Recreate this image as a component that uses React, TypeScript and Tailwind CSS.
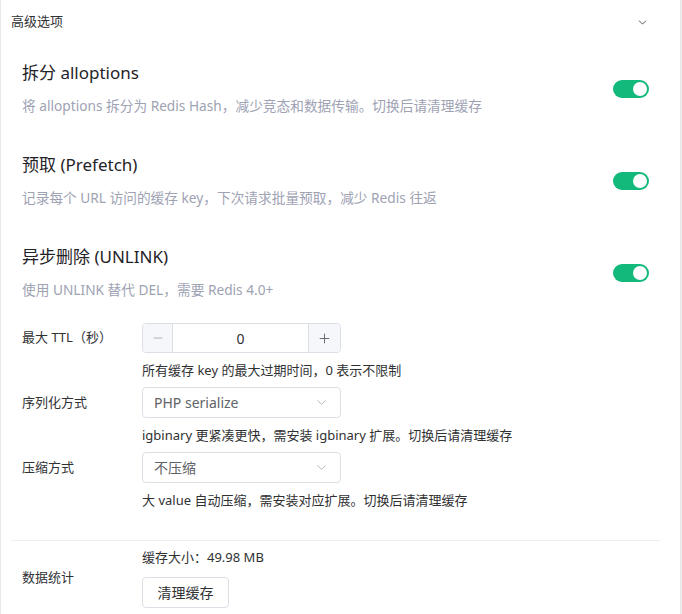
import { ChevronDown, Minus, Plus } from "lucide-react";

const font = { fontFamily: '"Noto Sans", "Noto Sans CJK SC", sans-serif' };

function Toggle() {
  return (
    <span className="flex h-[18px] w-[36px] shrink-0 items-center justify-end rounded-full bg-[#13b97b] px-[2px]">
      <span className="h-[14px] w-[14px] rounded-full bg-white" />
    </span>
  );
}

function ToggleRow({ title, desc }: { title: string; desc: string }) {
  return (
    <div className="flex items-center justify-between pr-[31px]">
      <div className="flex flex-col gap-[11px]">
        <div className="text-[17px] leading-[24px] text-[#1f2328]">{title}</div>
        <div className="text-[13.7px] leading-[20px] text-[#9ea2b3]">{desc}</div>
      </div>
      <Toggle />
    </div>
  );
}

function FieldRow({ label, children }: { label: string; children: React.ReactNode }) {
  return (
    <div className="flex items-center">
      <div className="w-[120px] shrink-0 text-[13px] text-[#303133]">{label}</div>
      <div className="flex flex-col">{children}</div>
    </div>
  );
}

function Select({ value }: { value: string }) {
  return (
    <div className="flex h-[31px] w-[199px] items-center justify-between rounded-[4px] border border-[#dcdfe6] bg-white pl-[11px] pr-[11px] text-[14px] text-[#606266]">
      <span>{value}</span>
      <ChevronDown className="h-[15px] w-[15px] text-[#b0b3ba]" strokeWidth={1.5} />
    </div>
  );
}

function Help({ children }: { children: React.ReactNode }) {
  return <div className="text-[13px] leading-[20px] text-[#303133]">{children}</div>;
}

export default function App() {
  return (
    <div className="flex h-[614px] w-[682px] bg-[#efefef]" style={font}>
      <div className="flex h-full w-[681px] flex-col overflow-hidden border-x border-[#e8e8e8] bg-white">
        <div className="flex h-[44px] shrink-0 items-center justify-between pl-[10px] pr-[31px]">
          <span className="text-[13px] text-[#303133]">高级选项</span>
          <ChevronDown className="h-[13px] w-[13px] text-[#333]" strokeWidth={1.5} />
        </div>

        <div className="flex flex-col gap-[37px] pl-[21px] pt-[17px]">
          <ToggleRow
            title="拆分 alloptions"
            desc="将 alloptions 拆分为 Redis Hash，减少竞态和数据传输。切换后请清理缓存"
          />
          <ToggleRow
            title="预取 (Prefetch)"
            desc="记录每个 URL 访问的缓存 key，下次请求批量预取，减少 Redis 往返"
          />
          <ToggleRow title="异步删除 (UNLINK)" desc="使用 UNLINK 替代 DEL，需要 Redis 4.0+" />
        </div>

        <div className="mt-[23px] flex flex-col gap-[7px] pl-[21px]">
          <FieldRow label="最大 TTL（秒）">
            <div className="flex h-[30px] w-[199px] overflow-hidden rounded-[4px] border border-[#dcdfe6] text-[14px] text-[#606266]">
              <span className="flex w-[30px] items-center justify-center border-r border-[#dcdfe6] bg-[#f5f7fa]">
                <Minus className="h-[14px] w-[14px] text-[#a8abb2]" strokeWidth={1.5} />
              </span>
              <span className="flex flex-1 items-center justify-center text-[#303133]">0</span>
              <span className="flex w-[32px] items-center justify-center border-l border-[#dcdfe6] bg-[#f5f7fa]">
                <Plus className="h-[15px] w-[15px] text-[#606266]" strokeWidth={1.5} />
              </span>
            </div>
          </FieldRow>
          <div className="pl-[120px]">
            <Help>所有缓存 key 的最大过期时间，0 表示不限制</Help>
          </div>
          <FieldRow label="序列化方式">
            <Select value="PHP serialize" />
          </FieldRow>
          <div className="pl-[120px]">
            <Help>igbinary 更紧凑更快，需安装 igbinary 扩展。切换后请清理缓存</Help>
          </div>
          <FieldRow label="压缩方式">
            <Select value="不压缩" />
          </FieldRow>
          <div className="pl-[120px]">
            <Help>大 value 自动压缩，需安装对应扩展。切换后请清理缓存</Help>
          </div>
        </div>

        <div className="ml-[10px] mr-[20px] mt-[30px] border-t border-[#ebeef5]" />

        <div className="mt-[6px] pl-[21px]">
          <FieldRow label="数据统计">
            <Help>缓存大小：49.98 MB</Help>
            <button className="mt-[10px] flex h-[31px] w-[87px] items-center justify-center rounded-[4px] border border-[#dcdfe6] bg-white text-[14px] text-[#303133]">
              清理缓存
            </button>
          </FieldRow>
        </div>
      </div>
    </div>
  );
}
